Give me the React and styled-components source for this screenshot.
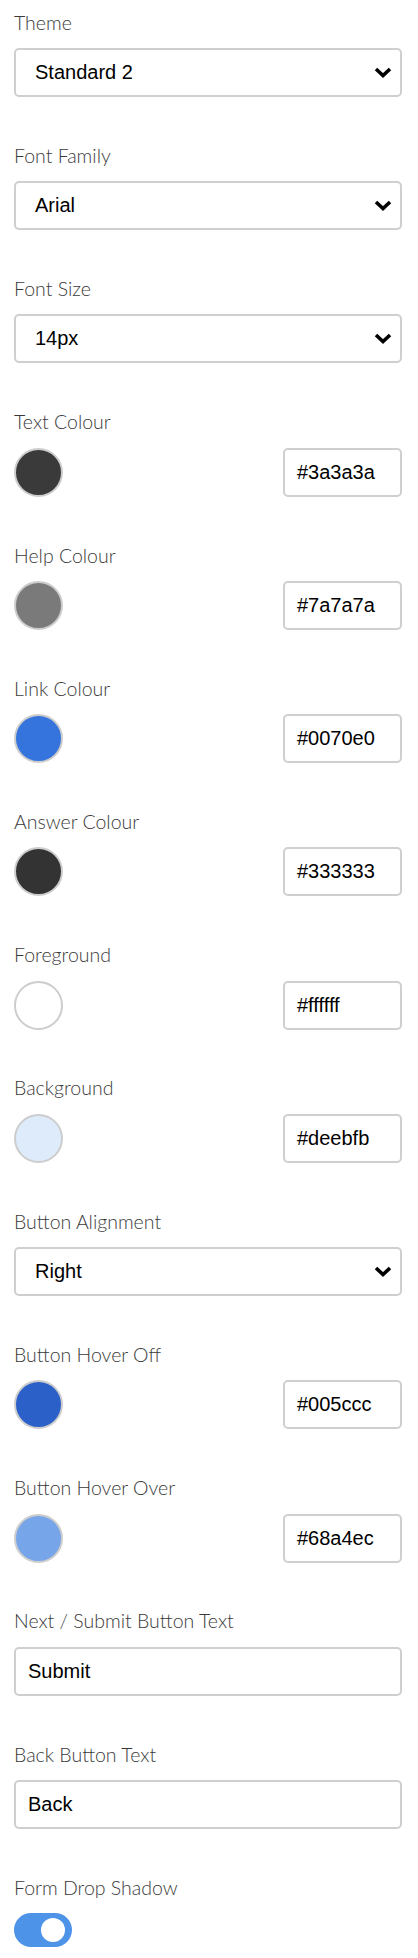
import styled, { createGlobalStyle } from "styled-components";

const Global = createGlobalStyle`
body {
  margin: 0;
  background: #fff;
}
* {
  box-sizing: border-box;
}
`;

const Page = styled.div`
width: 418px;
padding: 9.6px 16px 0 14px;
display: flex;
flex-direction: column;
`;

const Field = styled.div`
display: flex;
flex-direction: column;
margin-bottom: 45.85px;
`;

const Label = styled.div`
font-family: "Lato Light", Lato, "Open Sans", sans-serif;
font-weight: 300;
font-size: 19.5px;
line-height: 25px;
color: #3a3a3a;
margin-bottom: 13.4px;
`;

const SelectBox = styled.div`
display: flex;
align-items: center;
justify-content: space-between;
height: 49px;
border: 2px solid #cfcfcf;
border-radius: 5px;
padding: 0 8px 0 19px;
font-family: "Liberation Sans", Arial, sans-serif;
font-size: 20px;
color: #000;
`;

const ColorRow = styled.div`
display: flex;
align-items: center;
justify-content: space-between;
height: 49px;
`;

const Swatch = styled.div`
width: 49px;
height: 49px;
border-radius: 50%;
background: ${props => props.bg};
border: 2px solid #cdcdcd;
`;

const TextBox = styled.div`
display: flex;
align-items: center;
height: 49px;
width: ${props => props.w || "100%"};
border: 2px solid #cfcfcf;
border-radius: 5px;
padding: 0 ${props => props.px || 12}px;
font-family: "Liberation Sans", Arial, sans-serif;
font-size: 20px;
color: #000;
`;

const Toggle = styled.div`
display: flex;
align-items: center;
justify-content: flex-end;
width: 58px;
height: 33.5px;
border-radius: 17px;
background: #4d93e8;
padding-right: 7px;
`;

const Knob = styled.div`
width: 24px;
height: 24px;
border-radius: 50%;
background: #fff;
`;

const Chevron = () => (
    <svg width="18" height="11" viewBox="0 0 18 11">
        <polyline points="2,2 9,8.5 16,2" fill="none" stroke="#000" strokeWidth="3.6" />
    </svg>
);

const selects = [
    ["Theme", "Standard 2"],
    ["Font Family", "Arial"],
    ["Font Size", "14px"],
];

const colours = [
    ["Text Colour", "#3a3a3a"],
    ["Help Colour", "#7a7a7a"],
    ["Link Colour", "#0070e0"],
    ["Answer Colour", "#333333"],
    ["Foreground", "#ffffff"],
    ["Background", "#deebfb"],
];

// the swatches render a touch off the typed hex values
const swatchShade = {
    "#3a3a3a": "#3a3a3a",
    "#7a7a7a": "#7a7a7a",
    "#0070e0": "#3574dc",
    "#333333": "#333333",
    "#ffffff": "#ffffff",
    "#deebfb": "#deebfb",
    "#005ccc": "#2a60c8",
    "#68a4ec": "#76a5e9",
};

const SelectField = ({ label, value }) => (
    <Field>
        <Label>{label}</Label>
        <SelectBox>
            <span>{value}</span>
            <Chevron />
        </SelectBox>
    </Field>
);

const ColourField = ({ label, value }) => (
    <Field>
        <Label>{label}</Label>
        <ColorRow>
            <Swatch bg={swatchShade[value]} />
            <TextBox w="119px">{value}</TextBox>
        </ColorRow>
    </Field>
);

export default function App() {
    return (
        <Page>
            <Global />
            {selects.map(([l, v]) => <SelectField key={l} label={l} value={v} />)}
            {colours.map(([l, v]) => <ColourField key={l} label={l} value={v} />)}
            <SelectField label="Button Alignment" value="Right" />
            <ColourField label="Button Hover Off" value="#005ccc" />
            <ColourField label="Button Hover Over" value="#68a4ec" />
            <Field>
                <Label>Next / Submit Button Text</Label>
                <TextBox px={12}>Submit</TextBox>
            </Field>
            <Field>
                <Label>Back Button Text</Label>
                <TextBox px={12}>Back</TextBox>
            </Field>
            <Field>
                <Label>Form Drop Shadow</Label>
                <Toggle>
                    <Knob />
                </Toggle>
            </Field>
        </Page>
    );
}
